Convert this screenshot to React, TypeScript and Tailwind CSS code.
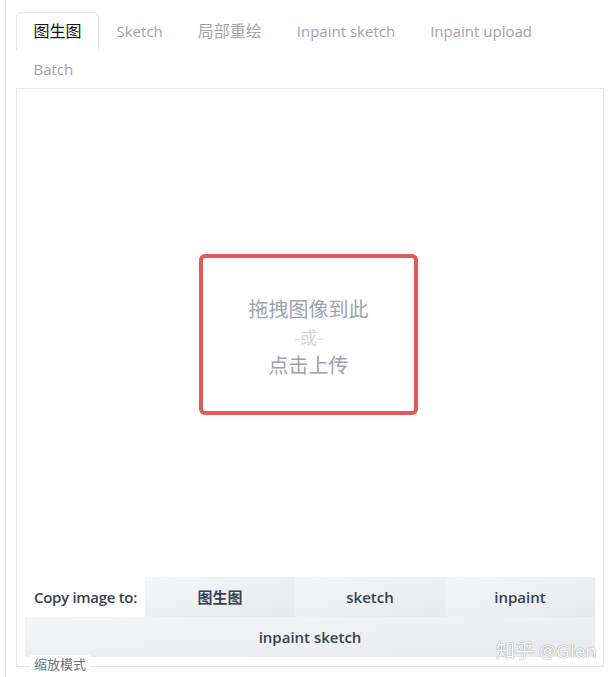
import { useState } from 'react'

const TABS = ['图生图', 'Sketch', '局部重绘', 'Inpaint sketch', 'Inpaint upload', 'Batch']
const TARGETS = ['图生图', 'sketch', 'inpaint']

const btn =
  'h-10 flex items-center justify-center bg-linear-to-br from-[#f5f6f8] to-[#e7e9ec] text-[15px] font-semibold text-[#374151]'

const isCjk = (s: string) => /[\u4e00-\u9fff]/.test(s)

export default function App() {
  const [tab, setTab] = useState('图生图')

  return (
    <div className="min-h-screen bg-white font-['Open_Sans','Noto_Sans_CJK_SC',sans-serif]">
      <div className="ml-[5px] min-h-[677px] border-l border-[#e5e7eb] pl-[10px] pt-3">
        {/* tabs */}
        <div className="flex w-[588px] flex-wrap">
          {TABS.map(t => (
            <button
              key={t}
              onClick={() => setTab(t)}
              className={`h-[38px] rounded-t-md border px-[16.5px] ${isCjk(t) ? 'text-[16px]' : 'text-[15px]'} ${
                tab === t
                  ? 'border-[#e5e7eb] border-b-transparent bg-white text-[#111]'
                  : 'border-transparent text-[#a0a4ab]'
              }`}
            >
              {t}
            </button>
          ))}
        </div>

        {/* image box */}
        <div className="relative flex w-[588px] flex-col border border-[#e5e7eb] pb-[9px]">
          <div className="flex h-[488px] items-center justify-center">
            <div className="ml-[-3px] mt-[2px] flex h-[161px] w-[219px] flex-col items-center justify-center rounded-md border-4 border-[#e25757] pt-[7px] leading-7">
              <span className="text-[20px] text-[#9ca3af]">拖拽图像到此</span>
              <span className="text-[17px] text-[#d1d5db]">-或-</span>
              <span className="text-[20px] text-[#9ca3af]">点击上传</span>
            </div>
          </div>

          <div className="px-2">
            <div className="flex">
              <div className="flex h-10 w-[120px] items-center pl-[9px] text-[15px] font-semibold tracking-[-0.3px] text-[#374151]">
                Copy image to:
              </div>
              {TARGETS.map(t => (
                <div key={t} className={`${btn} flex-1`}>
                  {t}
                </div>
              ))}
            </div>
            <div className={btn}>inpaint sketch</div>
          </div>

          <span className="absolute bottom-[1px] right-[6px] text-[19px] text-white [text-shadow:0_0_1px_#999,0_0_1px_#999]">
            知乎 @Glen
          </span>
          <span className="absolute bottom-[-7px] left-[13px] bg-white px-1 text-[13px] leading-[18px] text-[#6b7280]">
            缩放模式
          </span>
        </div>
      </div>
    </div>
  )
}
